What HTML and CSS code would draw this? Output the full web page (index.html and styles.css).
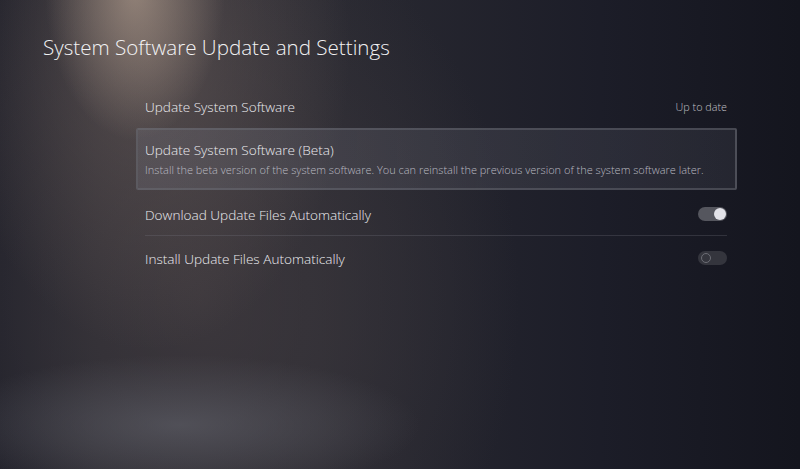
FILE: index.html
```html
<!DOCTYPE html>
<html lang="en">
<head>
  <meta charset="UTF-8">
  <title>System Software Update and Settings</title>
  <link rel="stylesheet" href="styles.css">
</head>
<body>
  <div class="screen">
    <h1 class="title">System Software Update and Settings</h1>

    <div class="list">
      <div class="row">
        <span class="label">Update System Software</span>
        <span class="value">Up to date</span>
      </div>

      <div class="row card">
        <div>
          <div class="label">Update System Software (Beta)</div>
          <div class="desc">Install the beta version of the system software. You can reinstall the previous version of the system software later.</div>
        </div>
      </div>

      <div class="row sep">
        <span class="label">Download Update Files Automatically</span>
        <span class="toggle on"><span class="knob"></span></span>
      </div>

      <div class="row">
        <span class="label">Install Update Files Automatically</span>
        <span class="toggle"><span class="knob"></span></span>
      </div>
    </div>
  </div>
</body>
</html>
```

FILE: styles.css
```css
html, body {
  margin: 0;
  height: 100%;
}
body {
  font-family: "Open Sans", "Noto Sans", sans-serif;
  font-weight: 300;
  color: #e6e6ea;
  background-color: #1d1e27;
  background-image:
    radial-gradient(ellipse 90px 150px at 135px -10px, rgba(175, 155, 140, 0.7), rgba(175, 155, 140, 0) 100%),
    radial-gradient(ellipse 200px 300px at 150px 50px, rgba(120, 105, 100, 0.5), rgba(120, 105, 100, 0) 100%),
    radial-gradient(ellipse 240px 70px at 180px 425px, rgba(98, 99, 108, 0.6), rgba(98, 99, 108, 0) 100%),
    radial-gradient(ellipse 320px 400px at 200px 300px, rgba(66, 60, 64, 0.75), rgba(66, 60, 64, 0) 100%),
    linear-gradient(90deg, #1e1f29 0%, #282830 12%, #2a2a32 40%, #1c1d28 75%, #14151e 100%);
  overflow: hidden;
}
.screen {
  width: 800px;
  height: 469px;
  box-sizing: border-box;
  padding: 34px 0 0 43px;
}
.title {
  margin: 0;
  font-weight: 300;
  font-size: 20.6px;
  line-height: 26px;
  color: #f2f2f4;
}
.list {
  margin: 24px 0 0 93px;
  width: 601px;
}
.row {
  display: flex;
  align-items: center;
  justify-content: space-between;
  height: 44px;
  padding: 0 10px 0 9px;
  box-sizing: border-box;
}
.label {
  font-size: 13.6px;
  color: #ebebef;
}
.value {
  font-size: 10.8px;
  color: #c0c0c6;
}
.card {
  height: 62px;
  border: 2px solid rgba(110, 112, 122, 0.45);
  border-radius: 2px;
  background: linear-gradient(90deg, rgba(120, 120, 132, 0.28), rgba(90, 92, 104, 0.22));
  padding-left: 7px;
}
.card .label {
  line-height: 18px;
}
.desc {
  margin-top: 3px;
  font-size: 11px;
  color: #b9b9c0;
  white-space: nowrap;
}
.sep {
  margin-top: 2px;
  position: relative;
}
.sep::after {
  content: "";
  position: absolute;
  left: 9px;
  right: 10px;
  bottom: 0;
  height: 1px;
  background: rgba(120, 120, 130, 0.28);
}
.toggle {
  position: relative;
  width: 29px;
  height: 14px;
  border-radius: 7px;
  background: #34353d;
}
.toggle .knob {
  position: absolute;
  top: 2px;
  left: 3px;
  width: 8px;
  height: 8px;
  border-radius: 50%;
  border: 1.5px solid #6c6d75;
}
.toggle.on {
  background: #55565e;
}
.toggle.on .knob {
  top: 1px;
  left: auto;
  right: 1px;
  width: 12px;
  height: 12px;
  border: none;
  background: #e2e2e8;
}
```
